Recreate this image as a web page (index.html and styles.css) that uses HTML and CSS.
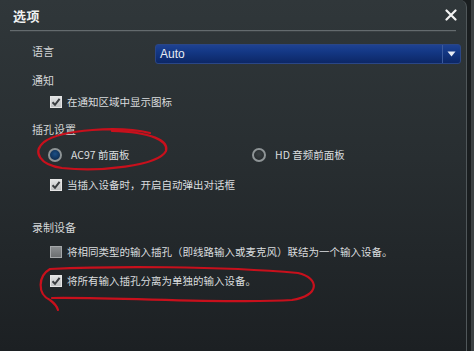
FILE: index.html
```html
<!DOCTYPE html>
<html lang="zh-CN">
<head>
<meta charset="utf-8">
<title>选项</title>
<link rel="stylesheet" href="styles.css">
</head>
<body>
<div class="frame">
  <div class="dialog">
    <div class="titlebar">
      <span class="title">选项</span>
      <svg class="close" width="12" height="12" viewBox="0 0 12 12"><path d="M1.5 1.5 L10.5 10.5 M10.5 1.5 L1.5 10.5" stroke="#f2f2f2" stroke-width="2.2" stroke-linecap="round"/></svg>
    </div>
    <div class="sep"></div>
    <div class="content">
      <div class="row-lang">
        <span class="label lang-label">语言</span>
        <div class="select">
          <span class="select-value">Auto</span>
          <span class="select-btn"><svg width="9" height="6" viewBox="0 0 9 6"><path d="M0.5 0.5 H8.5 L4.5 5.5 Z" fill="#e8ecf4"/></svg></span>
        </div>
      </div>

      <div class="label sec-notify">通知</div>
      <div class="opt opt-1">
        <span class="cb checked"><svg width="12" height="12" viewBox="0 0 12 12"><path d="M2.5 6.2 L5 8.8 L9.6 2.8" fill="none" stroke="#3a3d40" stroke-width="2"/></svg></span>
        <span class="opt-text">在通知区域中显示图标</span>
      </div>

      <div class="label sec-jack">插孔设置</div>
      <div class="radios">
        <div class="radio-item">
          <span class="radio on"></span>
          <span class="opt-text">AC97 前面板</span>
        </div>
        <div class="radio-item">
          <span class="radio"></span>
          <span class="opt-text">HD 音频前面板</span>
        </div>
      </div>
      <div class="opt opt-2">
        <span class="cb checked"><svg width="12" height="12" viewBox="0 0 12 12"><path d="M2.5 6.2 L5 8.8 L9.6 2.8" fill="none" stroke="#3a3d40" stroke-width="2"/></svg></span>
        <span class="opt-text">当插入设备时，开启自动弹出对话框</span>
      </div>

      <div class="label sec-rec">录制设备</div>
      <div class="opt opt-3">
        <span class="cb"></span>
        <span class="opt-text">将相同类型的输入插孔（即线路输入或麦克风）联结为一个输入设备。</span>
      </div>
      <div class="opt opt-4">
        <span class="cb checked"><svg width="12" height="12" viewBox="0 0 12 12"><path d="M2.5 6.2 L5 8.8 L9.6 2.8" fill="none" stroke="#3a3d40" stroke-width="2"/></svg></span>
        <span class="opt-text">将所有输入插孔分离为单独的输入设备。</span>
      </div>
    </div>
    <svg class="marks" width="467" height="351" viewBox="0 0 467 351">
      <path d="M150 133 C120 126, 62 129, 44 142 C32 152, 40 165, 62 168 C100 172, 158 166, 166 151 C169 141, 152 132, 112 131" fill="none" stroke="#c8101c" stroke-width="2.2" stroke-linecap="round"/>
      <path d="M298 273 C220 266, 110 266, 50 269 C38 276, 37 294, 50 300 C54 303, 57 306, 58 310 M52 298 C120 297, 230 304, 292 300 C320 296, 320 278, 298 273" fill="none" stroke="#c8101c" stroke-width="2.2" stroke-linecap="round"/>
    </svg>
  </div>
</div>
</body>
</html>
```

FILE: styles.css
```css
* { box-sizing: border-box; }
html, body { margin: 0; padding: 0; }
body {
  width: 474px;
  height: 351px;
  overflow: hidden;
  background: #1a1e20;
  font-family: "Noto Sans CJK SC", "Noto Sans", sans-serif;
  color: #d9dcdd;
}
.frame {
  width: 474px;
  height: 351px;
  display: flex;
  border-right: 3px solid #3c4244;
}
.dialog {
  position: relative;
  width: 467px;
  height: 351px;
  background: linear-gradient(to bottom, #30373a 0%, #282e31 45%, #1c2023 100%);
  border-right: 1px solid #50575a;
  border-top-right-radius: 7px;
}
.titlebar {
  height: 30px;
  display: flex;
  align-items: center;
  justify-content: space-between;
  padding: 0 9px 0 13px;
}
.title {
  font-size: 13px;
  font-weight: bold;
  color: #eef0f0;
  letter-spacing: 0.5px;
}
.close { display: block; }
.sep {
  height: 2px;
  margin: 0 10px 0 10px;
  border-top: 1px solid #646b6e;
  border-bottom: 1px solid #3a4043;
}
.content {
  padding-left: 32px;
  font-size: 10.5px;
  line-height: 16px;
}
.label { font-size: 11px; color: #d2d5d6; height: 16px; }
.row-lang {
  margin-top: 12px;
  display: grid;
  grid-template-columns: 123px 306px;
  align-items: center;
  height: 20px;
}
.lang-label { line-height: 14px; height: 14px; margin-top: -6px; }
.select {
  height: 20px;
  border-radius: 3px;
  border: 1px solid #2a4686;
  background: linear-gradient(to bottom, #1f4291 0%, #143886 35%, #0c2766 100%);
  display: flex;
  align-items: center;
  justify-content: space-between;
}
.select-value {
  font-family: "Liberation Sans", "Noto Sans", sans-serif;
  font-size: 12px;
  color: #e8ecf2;
  padding-left: 4px;
}
.select-btn {
  width: 18px;
  height: 18px;
  border-left: 1px solid #3b5a9c;
  display: flex;
  align-items: center;
  justify-content: center;
}
.select-btn svg { display: block; }
.sec-notify { margin-top: 8px; }
.opt {
  display: flex;
  align-items: center;
  height: 16px;
  padding-left: 18px;
  gap: 5px;
  white-space: nowrap;
}
.opt-1 { margin-top: 6px; }
.sec-jack { margin-top: 11px; }
.radios {
  margin-top: 10px;
  padding-left: 16px;
  display: grid;
  grid-template-columns: 204px auto;
  height: 16px;
  align-items: center;
}
.radio-item { display: flex; align-items: center; gap: 9px; }
.opt-2 { margin-top: 14px; }
.sec-rec { margin-top: 26px; }
.opt-3 { margin-top: 9px; }
.opt-4 { margin-top: 13px; }
.opt-text { color: #dadddf; }
.radio-item .opt-text { font-size: 10.5px; }
.cb {
  width: 12px;
  height: 12px;
  flex: none;
  border: 1px solid #a5a8aa;
  background: linear-gradient(to bottom, #8a8d8f, #6c6f71);
}
.cb.checked {
  border: 1px solid #e6e6e6;
  background: linear-gradient(to bottom, #e2e3e4, #bfc1c2);
  position: relative;
}
.cb.checked svg { display: block; margin: -1px 0 0 -1px; }
.radio {
  width: 14px;
  height: 14px;
  flex: none;
  border-radius: 50%;
  border: 2px solid #8e9496;
  background: radial-gradient(circle at 50% 40%, #3a4043, #1f2426);
}
.radio.on {
  background: radial-gradient(circle at 50% 40%, #1b4f86, #08203f);
}
.marks {
  position: absolute;
  left: 0;
  top: 0;
  pointer-events: none;
}
```
